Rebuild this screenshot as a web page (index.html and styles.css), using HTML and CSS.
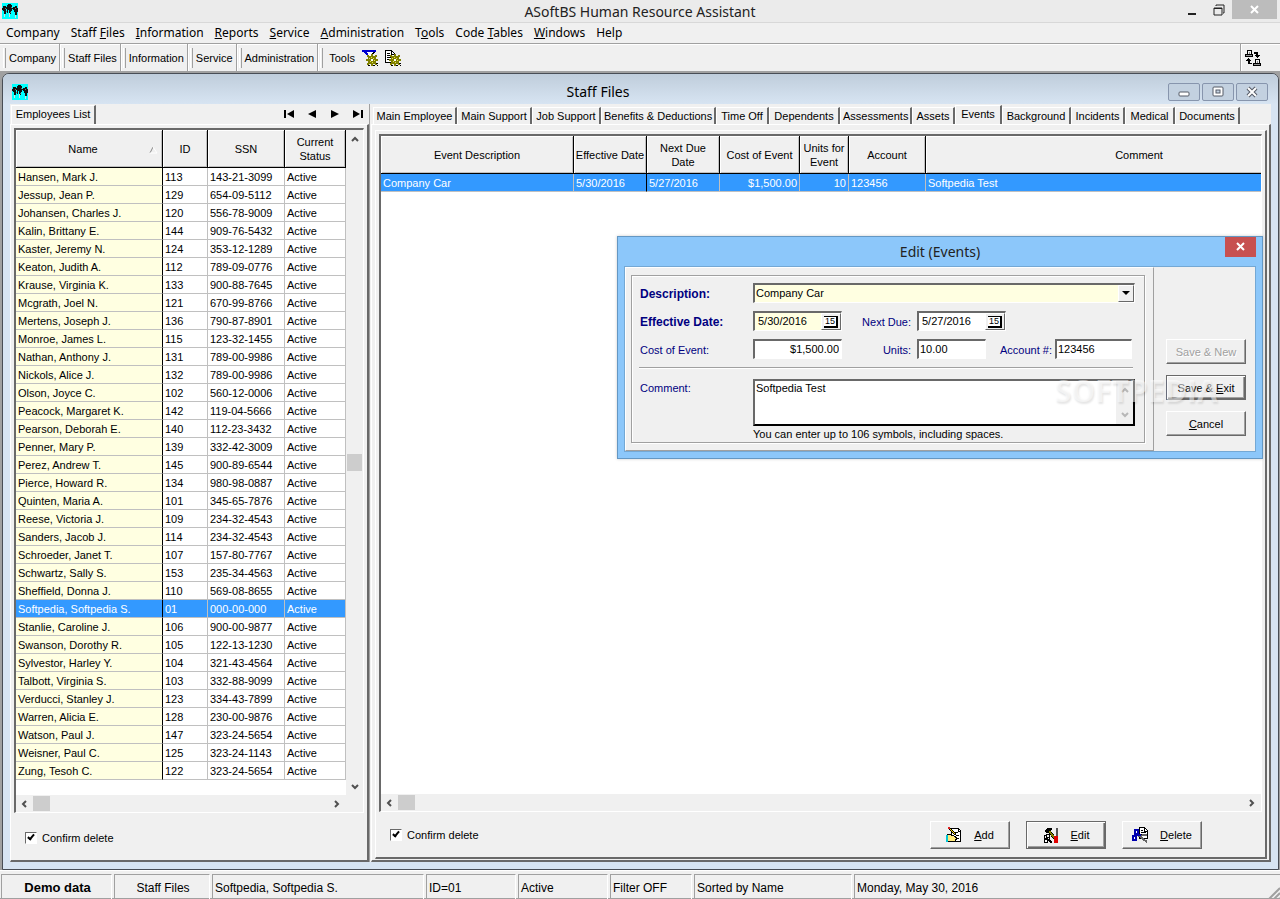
FILE: index.html
```html
<!DOCTYPE html>

<html lang="en">
    <head>
        <title>ASoftBS Human Resource Assistant</title>
        <meta charset="UTF-8">
        <meta name="viewport" content="width=device-width, initial-scale=1.0">
        <link rel="stylesheet" href="styles.css">
    </head>
    <body>
        <!-- shapes used more than once -->
        <svg class="defs" aria-hidden="true">
            <symbol id="palms" viewBox="0 0 16 16">
                <rect width="16" height="16" fill="#00ffff"/>
                <path d="M0 5h1V3h3v1h1V2h1V1h3v1h1v3h1V4h2V3h2v2h1v4h-1v3h-2V9h-1V7h-1V6h-1v2H9v3H7V7H6v3H5V6H4v5H2V8H1V7H0z" fill="#101010"/>
                <path d="M2 11h1v3H2zM7 10h1v4H7zM13 12h1v3h-1z" fill="#d0e0e0"/>
                <path d="M3 5h1v1H3zM9 4h1v1H9zM13 5h1v1h-1zM4 8h1v1H4zM8 9h1v1H8z" fill="#707070"/>
            </symbol>
            <symbol id="gear" viewBox="0 0 12 12">
                <path d="M5 0h2v2h2V1h2v2h-1v2h2v2h-2v2h1v2H9v-1H7v2H5v-2H3v1H1V9h1V7H0V5h2V3H1V1h2v1h2z" fill="#808000"/>
                <path d="M3 4h1v1H3zM5 3h1v1H5zM7 4h1v1H7zM4 7h1v1H4zM8 6h1v1H8zM6 8h1v1H6z" fill="#e8e84a"/>
                <path d="M5 5h2v2H5z" fill="#fff"/>
                <path d="M2 11h2v1H2zM10 9h2v1h-2zM7 11h2v1H7zM11 11h1v1h-1z" fill="#000"/>
            </symbol>
            <symbol id="chevron" viewBox="0 0 8 8">
                <path d="M1 6L4 3L7 6" fill="none" stroke="#505050" stroke-width="2"/>
            </symbol>
        </svg>

        <header class="title-bar">
            <svg class="icon"><use href="#palms"/></svg>
            <h1 class="title">ASoftBS Human Resource Assistant</h1>
            <div class="window-buttons">
                <button type="button" aria-label="Minimize"><svg width="12" height="12"><path d="M2 9h8v2H2z" fill="#222"/></svg></button>
                <button type="button" aria-label="Restore"><svg width="12" height="12"><path d="M3 2V1h8v8h-1M1 4h8v7H1zM1 4.500h8" fill="none" stroke="#222"/></svg></button>
                <button type="button" class="close" aria-label="Close"><svg width="10" height="10"><path d="M1 1l7 7M8 1l-7 7" stroke="#fff" stroke-width="2"/></svg></button>
            </div>
        </header>

        <nav class="menu">
            <a href="#">Company</a>
            <a href="#">Staff <u>F</u>iles</a>
            <a href="#"><u>I</u>nformation</a>
            <a href="#"><u>R</u>eports</a>
            <a href="#"><u>S</u>ervice</a>
            <a href="#"><u>A</u>dministration</a>
            <a href="#">T<u>o</u>ols</a>
            <a href="#">Code <u>T</u>ables</a>
            <a href="#"><u>W</u>indows</a>
            <a href="#">Help</a>
        </nav>

        <div class="toolbar">
            <div class="band"><button type="button">Company</button></div>
            <div class="band"><button type="button">Staff Files</button></div>
            <div class="band"><button type="button">Information</button></div>
            <div class="band"><button type="button">Service</button></div>
            <div class="band"><button type="button">Administration</button></div>
            <div class="band tools">
                <button type="button">Tools</button>
                <button type="button" aria-label="Filter options">
                    <svg class="icon" viewBox="0 0 16 16">
                        <path d="M0 0h14L9 6v6L6 9V6z" fill="#fff" stroke="#000"/>
                        <path d="M0 0h14v2H0zM2 2h3l3 5H6z" fill="#0000d0"/>
                        <use href="#gear" x="4" y="4" width="12" height="12"/>
                    </svg>
                </button>
                <button type="button" aria-label="Report options">
                    <svg class="icon" viewBox="0 0 16 16">
                        <path d="M.5.500h6l3 3v9h-9z" fill="#fff" stroke="#000"/>
                        <path d="M6 0v4h4M2 3.500h3M2 5.500h5M2 7.500h4M2 9.500h3" fill="none" stroke="#000"/>
                        <use href="#gear" x="4" y="4" width="12" height="12"/>
                    </svg>
                </button>
            </div>
            <div class="band-end">
                <button type="button" aria-label="Switch user">
                    <svg class="icon" viewBox="0 0 16 16">
                        <path d="M2 0h5v4h1v3H0V4h2zM10 9h5v4h1v3H8v-3h2z" fill="#000"/>
                        <path d="M3 1h3v3H3zM11 10h3v3h-3z" fill="#f0f0f0"/>
                        <path d="M4 2h1v2H4zM12 11h1v2h-1zM1 5h6v1H1zM9 14h6v1H9z" fill="#909090"/>
                        <path d="M9 2h4v3h2v1h-1v1h-1v1h-1V7h-1V6h-1V5h1V4H9zM3 8h1v1h1v1h1v1H5v2h2v1H3v-3H1v-1h1V9h1z" fill="#000"/>
                    </svg>
                </button>
            </div>
        </div>

        <main class="desktop">
            <section class="mdi">
                <div class="mdi-title">
                    <svg class="icon"><use href="#palms"/></svg>
                    <h2 class="title">Staff Files</h2>
                    <div class="mdi-buttons">
                        <button type="button" aria-label="Minimize"><svg width="14" height="12"><rect x="2" y="6" width="10" height="4" rx="1" fill="#fff" stroke="#555b66"/></svg></button>
                        <button type="button" aria-label="Maximize"><svg width="14" height="12"><rect x="2" y="1" width="10" height="9" rx="1" fill="#fff" stroke="#555b66"/><rect x="5" y="4" width="4" height="3" fill="#c5d3e2" stroke="#555b66"/></svg></button>
                        <button type="button" aria-label="Close"><svg width="14" height="12"><path d="M3 2l8 8M11 2l-8 8" stroke="#555b66" stroke-width="4"/><path d="M3 2l8 8M11 2l-8 8" stroke="#fff" stroke-width="2"/></svg></button>
                    </div>
                </div>

                <div class="panels">
                    <!-- employees -->
                    <section class="left-panel">
                        <div class="tabs left-tabs">
                            <button type="button" class="tab active">Employees List</button>
                            <div class="record-nav">
                                <button type="button" aria-label="First"><svg width="12" height="10"><path d="M1 1h2v8H1zM11 1v8L4 5z"/></svg></button>
                                <button type="button" aria-label="Previous"><svg width="12" height="10"><path d="M10 1v8L2 5z"/></svg></button>
                                <button type="button" aria-label="Next"><svg width="12" height="10"><path d="M2 1v8l8-4z"/></svg></button>
                                <button type="button" aria-label="Last"><svg width="12" height="10"><path d="M1 1v8l7-4zM9 1h2v8H9z"/></svg></button>
                            </div>
                        </div>
                        <div class="page left-page">
                            <div class="grid">
                                <div class="grid-view">
                                    <table class="employees">
                                        <colgroup><col class="c-name"><col class="c-id"><col class="c-ssn"><col class="c-status"></colgroup>
                                        <thead>
                                            <tr><th>Name<svg class="sort" width="9" height="8"><path d="M1 7L4 1" stroke="#888"/><path d="M4 1l4 6H1" fill="none" stroke="#fff"/></svg></th><th>ID</th><th>SSN</th><th>Current Status</th></tr>
                                        </thead>
                                        <tbody>
                                            <tr><td>Hansen, Mark J.</td><td>113</td><td>143-21-3099</td><td>Active</td></tr>
                                            <tr><td>Jessup, Jean P.</td><td>129</td><td>654-09-5112</td><td>Active</td></tr>
                                            <tr><td>Johansen, Charles J.</td><td>120</td><td>556-78-9009</td><td>Active</td></tr>
                                            <tr><td>Kalin, Brittany E.</td><td>144</td><td>909-76-5432</td><td>Active</td></tr>
                                            <tr><td>Kaster, Jeremy N.</td><td>124</td><td>353-12-1289</td><td>Active</td></tr>
                                            <tr><td>Keaton, Judith A.</td><td>112</td><td>789-09-0776</td><td>Active</td></tr>
                                            <tr><td>Krause, Virginia K.</td><td>133</td><td>900-88-7645</td><td>Active</td></tr>
                                            <tr><td>Mcgrath, Joel N.</td><td>121</td><td>670-99-8766</td><td>Active</td></tr>
                                            <tr><td>Mertens, Joseph J.</td><td>136</td><td>790-87-8901</td><td>Active</td></tr>
                                            <tr><td>Monroe, James L.</td><td>115</td><td>123-32-1455</td><td>Active</td></tr>
                                            <tr><td>Nathan, Anthony J.</td><td>131</td><td>789-00-9986</td><td>Active</td></tr>
                                            <tr><td>Nickols, Alice J.</td><td>132</td><td>789-00-9986</td><td>Active</td></tr>
                                            <tr><td>Olson, Joyce C.</td><td>102</td><td>560-12-0006</td><td>Active</td></tr>
                                            <tr><td>Peacock, Margaret K.</td><td>142</td><td>119-04-5666</td><td>Active</td></tr>
                                            <tr><td>Pearson, Deborah E.</td><td>140</td><td>112-23-3432</td><td>Active</td></tr>
                                            <tr><td>Penner, Mary P.</td><td>139</td><td>332-42-3009</td><td>Active</td></tr>
                                            <tr><td>Perez, Andrew T.</td><td>145</td><td>900-89-6544</td><td>Active</td></tr>
                                            <tr><td>Pierce, Howard R.</td><td>134</td><td>980-98-0887</td><td>Active</td></tr>
                                            <tr><td>Quinten, Maria A.</td><td>101</td><td>345-65-7876</td><td>Active</td></tr>
                                            <tr><td>Reese, Victoria J.</td><td>109</td><td>234-32-4543</td><td>Active</td></tr>
                                            <tr><td>Sanders, Jacob J.</td><td>114</td><td>234-32-4543</td><td>Active</td></tr>
                                            <tr><td>Schroeder, Janet T.</td><td>107</td><td>157-80-7767</td><td>Active</td></tr>
                                            <tr><td>Schwartz, Sally S.</td><td>153</td><td>235-34-4563</td><td>Active</td></tr>
                                            <tr><td>Sheffield, Donna J.</td><td>110</td><td>569-08-8655</td><td>Active</td></tr>
                                            <tr class="selected"><td>Softpedia, Softpedia S.</td><td>01</td><td>000-00-000</td><td>Active</td></tr>
                                            <tr><td>Stanlie, Caroline J.</td><td>106</td><td>900-00-9877</td><td>Active</td></tr>
                                            <tr><td>Swanson, Dorothy R.</td><td>105</td><td>122-13-1230</td><td>Active</td></tr>
                                            <tr><td>Sylvestor, Harley Y.</td><td>104</td><td>321-43-4564</td><td>Active</td></tr>
                                            <tr><td>Talbott, Virginia S.</td><td>103</td><td>332-88-9099</td><td>Active</td></tr>
                                            <tr><td>Verducci, Stanley J.</td><td>123</td><td>334-43-7899</td><td>Active</td></tr>
                                            <tr><td>Warren, Alicia E.</td><td>128</td><td>230-00-9876</td><td>Active</td></tr>
                                            <tr><td>Watson, Paul J.</td><td>147</td><td>323-24-5654</td><td>Active</td></tr>
                                            <tr><td>Weisner, Paul C.</td><td>125</td><td>323-24-1143</td><td>Active</td></tr>
                                            <tr><td>Zung, Tesoh C.</td><td>122</td><td>323-24-5654</td><td>Active</td></tr>
                                        </tbody>
                                    </table>
                                </div>
                                <div class="vscroll">
                                    <svg class="arrow"><use href="#chevron"/></svg>
                                    <div class="vtrack"><div class="thumb"></div></div>
                                    <svg class="arrow down"><use href="#chevron"/></svg>
                                </div>
                                <div class="hscroll">
                                    <svg class="arrow left"><use href="#chevron"/></svg>
                                    <div class="thumb"></div>
                                    <svg class="arrow right"><use href="#chevron"/></svg>
                                </div>
                            </div>
                            <div class="page-footer">
                                <label class="check"><input type="checkbox" checked>Confirm delete</label>
                            </div>
                        </div>
                    </section>

                    <!-- details of the selected employee -->
                    <section class="right-panel">
                        <div class="tabs right-tabs">
                            <button type="button" class="tab">Main Employee</button>
                            <button type="button" class="tab">Main Support</button>
                            <button type="button" class="tab">Job Support</button>
                            <button type="button" class="tab">Benefits &amp; Deductions</button>
                            <button type="button" class="tab">Time Off</button>
                            <button type="button" class="tab">Dependents</button>
                            <button type="button" class="tab">Assessments</button>
                            <button type="button" class="tab">Assets</button>
                            <button type="button" class="tab active">Events</button>
                            <button type="button" class="tab">Background</button>
                            <button type="button" class="tab">Incidents</button>
                            <button type="button" class="tab">Medical</button>
                            <button type="button" class="tab">Documents</button>
                        </div>
                        <div class="page right-page">
                            <div class="frame">
                                <div class="grid">
                                    <div class="grid-view">
                                        <table class="events">
                                            <colgroup><col class="c-desc"><col class="c-date"><col class="c-date"><col class="c-cost"><col class="c-units"><col class="c-account"><col class="c-comment"></colgroup>
                                            <thead>
                                                <tr><th>Event Description</th><th>Effective Date</th><th>Next Due<br>Date</th><th>Cost of Event</th><th>Units for<br>Event</th><th>Account</th><th>Comment</th></tr>
                                            </thead>
                                            <tbody>
                                                <tr class="selected"><td>Company Car</td><td>5/30/2016</td><td>5/27/2016</td><td class="num">$1,500.00</td><td class="num">10</td><td>123456</td><td>Softpedia Test</td></tr>
                                            </tbody>
                                        </table>
                                    </div>
                                    <div class="hscroll">
                                        <svg class="arrow left"><use href="#chevron"/></svg>
                                        <div class="thumb"></div>
                                        <svg class="arrow right"><use href="#chevron"/></svg>
                                    </div>
                                </div>
                                <div class="page-footer actions">
                                    <label class="check"><input type="checkbox" checked>Confirm delete</label>
                                    <button type="button" class="button">
                                        <svg class="icon" viewBox="0 0 16 16">
                                            <path d="M5.500 1.500h7l2 2v11h-9z" fill="#fff" stroke="#000"/>
                                            <path d="M12 1v3h3M8 5.500h4M10 8.500h3M10 11.500h3" fill="none" stroke="#000"/>
                                            <path d="M2 7l6 2 3 2-2 3-6 1-3-3z" fill="#ffe97a" stroke="#000"/>
                                            <path d="M0 8h2v7H0z" fill="#00c8d8"/>
                                            <path d="M3 1l7 7" stroke="#000" stroke-width="2"/>
                                            <path d="M4 2l5 5" stroke="#ffd800"/>
                                            <path d="M2 0h2v2H2z" fill="#e02020"/>
                                        </svg>
                                        <span><u>A</u>dd</span>
                                    </button>
                                    <button type="button" class="button default">
                                        <svg class="icon" viewBox="0 0 16 16">
                                            <path d="M6 4l8 10" stroke="#000" stroke-width="3"/>
                                            <path d="M6 4l8 10" stroke="#808000" stroke-width="2"/>
                                            <path d="M1 4l3-3h5v2H7L4 6z" fill="#000"/>
                                            <path d="M13.500 1v8" stroke="#555" stroke-width="2"/>
                                            <path d="M11 9h4v7h-4z" fill="#e00000"/>
                                            <path d="M1 8.500h2v2h3v2l3 3M3 7.500h3v3M1 8v3h3l4 5" fill="none" stroke="#000"/>
                                            <path d="M1.500 12.500h3v3h-3z" fill="#fff" stroke="#000"/>
                                        </svg>
                                        <span><u>E</u>dit</span>
                                    </button>
                                    <button type="button" class="button">
                                        <svg class="icon" viewBox="0 0 16 16">
                                            <path d="M7.500.500h5l3 3v8h-8z" fill="#fff" stroke="#000"/>
                                            <path d="M12 0v4h4M9 3.500h2M9 5.500h5M9 7.500h5" fill="none" stroke="#000"/>
                                            <path d="M6 8l9 7M6 9l9-1" stroke="#666" stroke-width="2"/>
                                            <path d="M3 3h3v4H3zM1 9h3v4H1z" fill="#fff" stroke="#0000b0" stroke-width="2"/>
                                            <path d="M4 8h5" stroke="#0000b0" stroke-width="2"/>
                                        </svg>
                                        <span><u>D</u>elete</span>
                                    </button>
                                </div>
                            </div>
                        </div>
                    </section>
                </div>
            </section>
        </main>

        <footer class="status-bar">
            <div class="demo">Demo data</div>
            <div class="centered">Staff Files</div>
            <div>Softpedia, Softpedia S.</div>
            <div>ID=01</div>
            <div>Active</div>
            <div>Filter OFF</div>
            <div>Sorted by Name</div>
            <div class="date">Monday, May 30, 2016<svg width="14" height="14"><path d="M1 14L14 1M6 14l8-8M11 14l3-3" stroke="#a0a0a0" stroke-width="2"/></svg></div>
        </footer>

        <!-- event editor -->
        <form class="dialog">
            <div class="dialog-title">
                <h2 class="title">Edit (Events)</h2>
                <button type="button" class="dialog-close" aria-label="Close"><svg width="10" height="10"><path d="M1 1l7 7M8 1l-7 7" stroke="#fff" stroke-width="2"/></svg></button>
            </div>
            <div class="dialog-body">
                <div class="dialog-main">
                    <div class="group">
                        <div class="row">
                            <label class="caption required" for="description">Description:</label>
                            <div class="combo">
                                <select id="description"><option>Company Car</option></select>
                                <span class="drop"><svg width="8" height="5"><path d="M0 0h8L4 4z"/></svg></span>
                            </div>
                        </div>
                        <div class="row">
                            <label class="caption required" for="effective">Effective Date:</label>
                            <div class="date-box yellow"><input id="effective" type="text" value="5/30/2016"><button type="button" aria-label="Pick effective date"><span>15</span></button></div>
                            <label class="side" for="due">Next Due:</label>
                            <div class="date-box"><input id="due" type="text" value="5/27/2016"><button type="button" aria-label="Pick due date"><span>15</span></button></div>
                        </div>
                        <div class="row">
                            <label class="caption" for="cost">Cost of Event:</label>
                            <input id="cost" class="box cost" type="text" value="$1,500.00">
                            <label class="side" for="units">Units:</label>
                            <input id="units" class="box units" type="text" value="10.00">
                            <label class="side" for="account">Account #:</label>
                            <input id="account" class="box account" type="text" value="123456">
                        </div>
                        <hr class="rule">
                        <div class="row comment-row">
                            <label class="caption" for="comment">Comment:</label>
                            <div class="memo">
                                <textarea id="comment">Softpedia Test</textarea>
                                <div class="memo-scroll">
                                    <svg class="arrow"><use href="#chevron"/></svg>
                                    <svg class="arrow down"><use href="#chevron"/></svg>
                                </div>
                            </div>
                        </div>
                        <p class="hint">You can enter up to 106 symbols, including spaces.</p>
                    </div>
                </div>
                <div class="dialog-buttons">
                    <button type="button" class="button" disabled>Save &amp; New</button>
                    <button type="button" class="button default"><span>Save &amp; <u>E</u>xit</span></button>
                    <button type="button" class="button"><span><u>C</u>ancel</span></button>
                </div>
            </div>
            <div class="watermark">SOFTPEDIA<sup>®</sup></div>
        </form>
    </body>
</html>
```
FILE: styles.css
```css
* , *:before, *:after{
    box-sizing: border-box;
}
body {
    margin: 0;
    height: 100vh;
    display: flex;
    flex-direction: column;
    overflow: hidden;
    background: #f0f0f0;
    color: #000;
    font-family: "Liberation Sans", Arial, sans-serif;
    font-size: 11px;
    line-height: 14px;
}
button, input, select, textarea {
    font: inherit;
    color: inherit;
    margin: 0;
    padding: 0;
    border: 0;
    border-radius: 0;
    outline: none;
    background: none;
}
a {
    color: inherit;
    text-decoration: none;
}
svg {
    display: block;
    flex: none;
}
.defs {
    position: absolute;
    width: 0;
    height: 0;
}
.icon {
    width: 16px;
    height: 16px;
    shape-rendering: crispEdges;
}
.title {
    margin: 0;
    flex: 1;
    text-align: center;
    font: 14px/20px "Noto Sans", "Open Sans", sans-serif;
    color: #222;
}

/* main window */
.title-bar {
    display: flex;
    align-items: flex-start;
    height: 23px;
    padding-left: 2px;
    background: #ebebeb;
    border-bottom: 1px solid #d8d8d8;
}
.title-bar .icon {
    margin-top: 3px;
    margin-right: 84px;
}
.title-bar .title {
    line-height: 23px;
}
.window-buttons {
    display: flex;
    height: 19px;
    margin-right: 3px;
}
.window-buttons button {
    display: flex;
    align-items: center;
    justify-content: center;
    width: 27px;
}
.window-buttons .close {
    width: 45px;
    background: #bcbcbc;
}
.menu {
    display: flex;
    height: 20px;
    padding: 0 6px;
    gap: 11px;
    font: 12px/20px "Noto Sans", "Open Sans", sans-serif;
}
.toolbar {
    display: flex;
    height: 29px;
    padding-left: 1px;
    border-top: 1px solid #a0a0a0;
    border-bottom: 1px solid #a0a0a0;
    box-shadow: inset 0 1px #fff;
}
.band {
    display: flex;
    align-items: center;
    padding: 1px 3px 0 8px;
    border-right: 1px solid #a0a0a0;
    box-shadow: 1px 0 #fff;
    background: linear-gradient(#a0a0a0, #a0a0a0) 4px 4px / 1px 20px no-repeat,
        linear-gradient(#fff, #fff) 2px 4px / 1px 20px no-repeat;
}
.band.tools {
    border: 0;
    box-shadow: none;
    gap: 7px;
    padding-left: 11px;
}
.band-end {
    display: flex;
    align-items: center;
    margin-left: auto;
    width: 40px;
    padding-left: 4px;
    border-left: 1px solid #a0a0a0;
    box-shadow: inset 1px 0 #fff;
}
.desktop {
    flex: 1;
    min-height: 0;
    display: flex;
    padding: 1px 1px 0 2px;
    background: #a0a0a0;
}
.mdi {
    flex: 1;
    min-width: 0;
    display: flex;
    flex-direction: column;
    padding: 0 7px 7px;
    border: 1px solid #484d55;
    border-radius: 7px 7px 0 0;
    background: #d7e4f2;
}
.mdi-title {
    display: flex;
    align-items: center;
    height: 30px;
    margin: 0 -7px;
    padding: 6px 10px 0 9px;
    border-radius: 6px 6px 0 0;
    background: linear-gradient(#bfcddb, #d7e4f2);
}
.mdi-title .title {
    color: #000;
}
.mdi-buttons {
    display: flex;
    gap: 2px;
}
.mdi-buttons button {
    display: flex;
    align-items: center;
    justify-content: center;
    width: 32px;
    height: 18px;
    border: 1px solid #8795ad;
    border-radius: 2px;
    background: #c3d1e0;
}

/* tabs and pages */
.panels {
    flex: 1;
    min-height: 0;
    display: flex;
    background: #f0f0f0;
}
.left-panel {
    display: flex;
    flex-direction: column;
    width: 360px;
    flex: none;
    border-right: 1px solid #a0a0a0;
}
.right-panel {
    flex: 1;
    min-width: 0;
    display: flex;
    flex-direction: column;
    padding-left: 1px;
}
.tabs {
    display: flex;
    align-items: flex-end;
    height: 20px;
    padding-left: 1px;
}
.tab {
    height: 17px;
    padding: 0 2px;
    text-align: center;
    white-space: nowrap;
    border: solid;
    border-width: 1px 2px 0 1px;
    border-color: #fff #696969 #fff #fff;
}
.tab.active {
    height: 19px;
    padding-bottom: 3px;
}
.left-tabs .tab {
    width: 85px;
}
.right-tabs {
    display: grid;
    grid-template-columns: 84px 75px 69px 115px 53px 71px 72px 43px 47px 69px 54px 50px 65px;
    padding-left: 2px;
}
.record-nav {
    display: flex;
    gap: 11px;
    margin: 0 5px 5px auto;
}
.page {
    flex: 1;
    min-height: 0;
    display: flex;
    flex-direction: column;
    border: solid;
    border-width: 1px 2px 2px 1px;
    border-color: #fff #696969 #696969 #fff;
}
.left-page {
    padding: 3px 3px 0 3px;
}
.right-page {
    padding: 5px 2px 1px 3px;
}
.frame {
    flex: 1;
    min-height: 0;
    display: flex;
    flex-direction: column;
    padding: 3px 3px 0;
    border: solid;
    border-width: 1px 2px 2px 1px;
    border-color: #fff #696969 #696969 #fff;
}
.grid {
    flex: 1;
    min-height: 0;
    display: grid;
    grid-template: minmax(0, 1fr) 17px / minmax(0, 1fr) auto;
    border: solid;
    border-width: 2px 1px 1px 2px;
    border-color: #696969 #fff #fff #696969;
}
.grid-view {
    overflow: hidden;
    background: #fff;
}
table {
    table-layout: fixed;
    border-collapse: separate;
    border-spacing: 0;
}
.employees {
    width: 330px;
}
.events {
    width: 972px;
}
.c-name {
    width: 147px;
}
.c-id {
    width: 45px;
}
.c-ssn, .c-account {
    width: 77px;
}
.c-status {
    width: 61px;
}
.c-desc {
    width: 193px;
}
.c-date {
    width: 73px;
}
.c-cost {
    width: 80px;
}
.c-units {
    width: 49px;
}
.c-comment {
    width: 427px;
}
th {
    height: 38px;
    padding: 0 1px;
    font-weight: normal;
    background: #f0f0f0;
    border: solid #000;
    border-width: 0 1px 1px 0;
    box-shadow: inset 1px 1px #fff, inset -1px -1px #c0c0c0;
}
.employees th:last-child {
    padding: 0 8px;
}
.sort {
    float: right;
    margin: 4px 3px 0 0;
}
td {
    height: 18px;
    padding: 0 2px;
    white-space: nowrap;
    border: solid #c0c0c0;
    border-width: 0 1px 1px 0;
}
td:first-child {
    background: #ffffe1;
}
.employees td:first-child, .events td:nth-child(2) {
    border-right-color: #000;
}
.selected td, .selected td:first-child {
    color: #fff;
    background: #3399ff;
}
.num {
    text-align: right;
}
.vscroll {
    display: flex;
    flex-direction: column;
    align-items: center;
    width: 17px;
    padding: 5px 0 4px;
}
.vtrack {
    flex: 1;
    padding-top: 311px;
}
.vtrack .thumb {
    width: 15px;
}
.hscroll {
    grid-column: 1 / -1;
    display: flex;
    align-items: center;
    padding-left: 4px;
}
.left-page .hscroll {
    padding-right: 17px;
}
.thumb {
    width: 17px;
    height: 17px;
    background: #cdcdcd;
}
.hscroll .thumb {
    height: 15px;
    margin-left: 5px;
    margin-right: auto;
}
.arrow {
    width: 8px;
    height: 8px;
}
.down {
    transform: rotate(180deg);
}
.left {
    transform: rotate(-90deg);
}
.right {
    transform: rotate(90deg);
    margin-right: 5px;
}
.page-footer {
    display: flex;
    align-items: center;
    height: 47px;
    padding: 2px 11px 0;
}
.page-footer.actions {
    height: 45px;
    padding: 0 60px 0 11px;
    gap: 16px;
}
.check {
    display: flex;
    align-items: center;
    gap: 5px;
    margin-right: auto;
}
.check input {
    appearance: none;
    width: 12px;
    height: 12px;
    border: 1px solid;
    border-color: #696969 #fff #fff #696969;
    background: #fff;
}
.check input:checked:before {
    content: "";
    display: block;
    width: 4px;
    height: 7px;
    margin: 0 0 0 3px;
    border: solid #000;
    border-width: 0 2px 2px 0;
    transform: rotate(40deg);
}
.button {
    display: flex;
    align-items: center;
    justify-content: center;
    width: 80px;
    height: 28px;
    border: 1px solid;
    border-color: #fff #696969 #696969 #fff;
    box-shadow: inset -1px -1px #a0a0a0;
}
.button .icon {
    margin-right: 12px;
}
.button.default {
    border-color: #696969;
    box-shadow: inset 1px 1px #fff, inset -1px -1px #696969, inset -2px -2px #a0a0a0;
}
.button:disabled {
    color: #a0a0a0;
    text-shadow: 1px 1px #fff;
}

/* status bar */
.status-bar {
    display: grid;
    grid-template-columns: 111px 96px 212px 90px 90px 82px 158px 1fr;
    gap: 2px;
    height: 29px;
    padding: 3px 0 1px 1px;
    border-top: 1px solid #fff;
    border-bottom: 1px solid #a0a0a0;
    font-size: 12px;
    line-height: 26px;
}
.status-bar div {
    padding-left: 2px;
    white-space: nowrap;
    border: solid;
    border-width: 1px 1px 0;
    border-color: #a0a0a0 #fff #fff #a0a0a0;
}
.status-bar .demo {
    font-size: 13px;
    font-weight: bold;
    text-align: center;
}
.status-bar .centered {
    text-align: center;
}
.status-bar .date {
    display: flex;
    justify-content: space-between;
    align-items: flex-start;
    border-right: 0;
}
.date svg {
    align-self: flex-end;
}

/* edit window floating over the grid */
.dialog {
    position: absolute;
    top: 236px;
    right: 17px;
    width: 646px;
    padding: 0 6px 6px;
    border: 1px solid #6497c3;
    background: #8cc7fa;
    box-shadow: 0 0 3px rgba(0, 0, 0, 0.2);
}
.dialog-title {
    display: flex;
    align-items: flex-start;
    height: 29px;
}
.dialog-title .title {
    line-height: 29px;
    padding-left: 31px;
}
.dialog-close {
    display: flex;
    align-items: center;
    justify-content: center;
    width: 31px;
    height: 20px;
    background: #c75050;
}
.dialog-body {
    display: flex;
    border: 1px solid #74a8d4;
    background: #f0f0f0;
}
.dialog-main {
    flex: 1;
    padding: 7px 8px 7px 5px;
    border: 1px solid;
    border-color: #fff #a0a0a0 #a0a0a0 #fff;
}
.dialog-buttons {
    display: flex;
    flex-direction: column;
    justify-content: flex-end;
    gap: 11px;
    width: 101px;
    padding: 0 9px 15px 12px;
}
.dialog-buttons .button {
    height: 25px;
}
.group {
    padding: 7px 9px 1px 8px;
    border: 1px solid #a0a0a0;
    box-shadow: inset 1px 1px #fff, 1px 1px #fff;
}
.row {
    display: flex;
    align-items: center;
    height: 20px;
    margin-bottom: 8px;
    color: #000080;
}
.row label {
    padding-top: 2px;
}
.row input, .row select, .row textarea {
    color: #000;
}
.caption {
    width: 113px;
}
.required {
    font-size: 12px;
    font-weight: bold;
}
.side {
    width: 75px;
    padding-right: 6px;
    text-align: right;
}
.combo, .date-box, .box, .memo {
    display: flex;
    height: 20px;
    border: solid;
    border-width: 2px 1px 1px 2px;
    border-color: #696969 #fff #fff #696969;
    background: #fff;
}
.combo {
    flex: 1;
    background: #ffffe1;
}
.combo select {
    appearance: none;
    flex: 1;
    padding-left: 1px;
}
.combo select, .date-box input {
    padding-bottom: 2px;
}
.drop, .date-box button {
    display: flex;
    align-items: center;
    justify-content: center;
    width: 16px;
    background: #f0f0f0;
    border: 1px solid;
    border-color: #fff #696969 #696969 #fff;
}
.date-box {
    width: 89px;
}
.date-box.yellow {
    background: #ffffe1;
}
.date-box input {
    flex: 1;
    min-width: 0;
    padding-left: 3px;
}
.date-box button {
    width: 20px;
}
.date-box button span {
    width: 14px;
    height: 12px;
    color: #000;
    font-size: 9px;
    line-height: 9px;
    text-align: center;
    background: #fff;
    border: solid #000;
    border-width: 1px 2px 2px 0;
}
.box {
    padding: 0 2px 2px 1px;
}
.cost {
    width: 89px;
    text-align: right;
}
.units {
    width: 69px;
}
.units + .side {
    width: 69px;
    padding-right: 3px;
}
.account {
    width: 77px;
}
.rule {
    height: 2px;
    margin: 0 2px 10px -1px;
    border: 0;
    border-top: 1px solid #a0a0a0;
    border-bottom: 1px solid #fff;
}
.comment-row {
    height: 47px;
    margin-bottom: 1px;
    align-items: flex-start;
}
.memo {
    flex: 1;
    height: 47px;
    border-width: 2px;
    border-color: #696969 #000 #000 #696969;
}
.memo textarea {
    flex: 1;
    resize: none;
    overflow: hidden;
    padding: 0 1px;
}
.memo-scroll {
    display: flex;
    flex-direction: column;
    justify-content: space-between;
    align-items: center;
    width: 17px;
    padding: 5px 0;
    background: #f0f0f0;
}
.memo-scroll .arrow {
    opacity: 0.35;
}
.hint {
    margin: 0 0 0 113px;
}
.watermark {
    position: absolute;
    top: 138px;
    right: 38px;
    font: bold 30px/32px "Open Sans", sans-serif;
    color: rgba(255, 255, 255, 0.5);
    text-shadow: 1px 2px 2px rgba(0, 0, 0, 0.1);
    pointer-events: none;
}
.watermark sup {
    font-size: 8px;
    line-height: 8px;
    vertical-align: 14px;
}
```
